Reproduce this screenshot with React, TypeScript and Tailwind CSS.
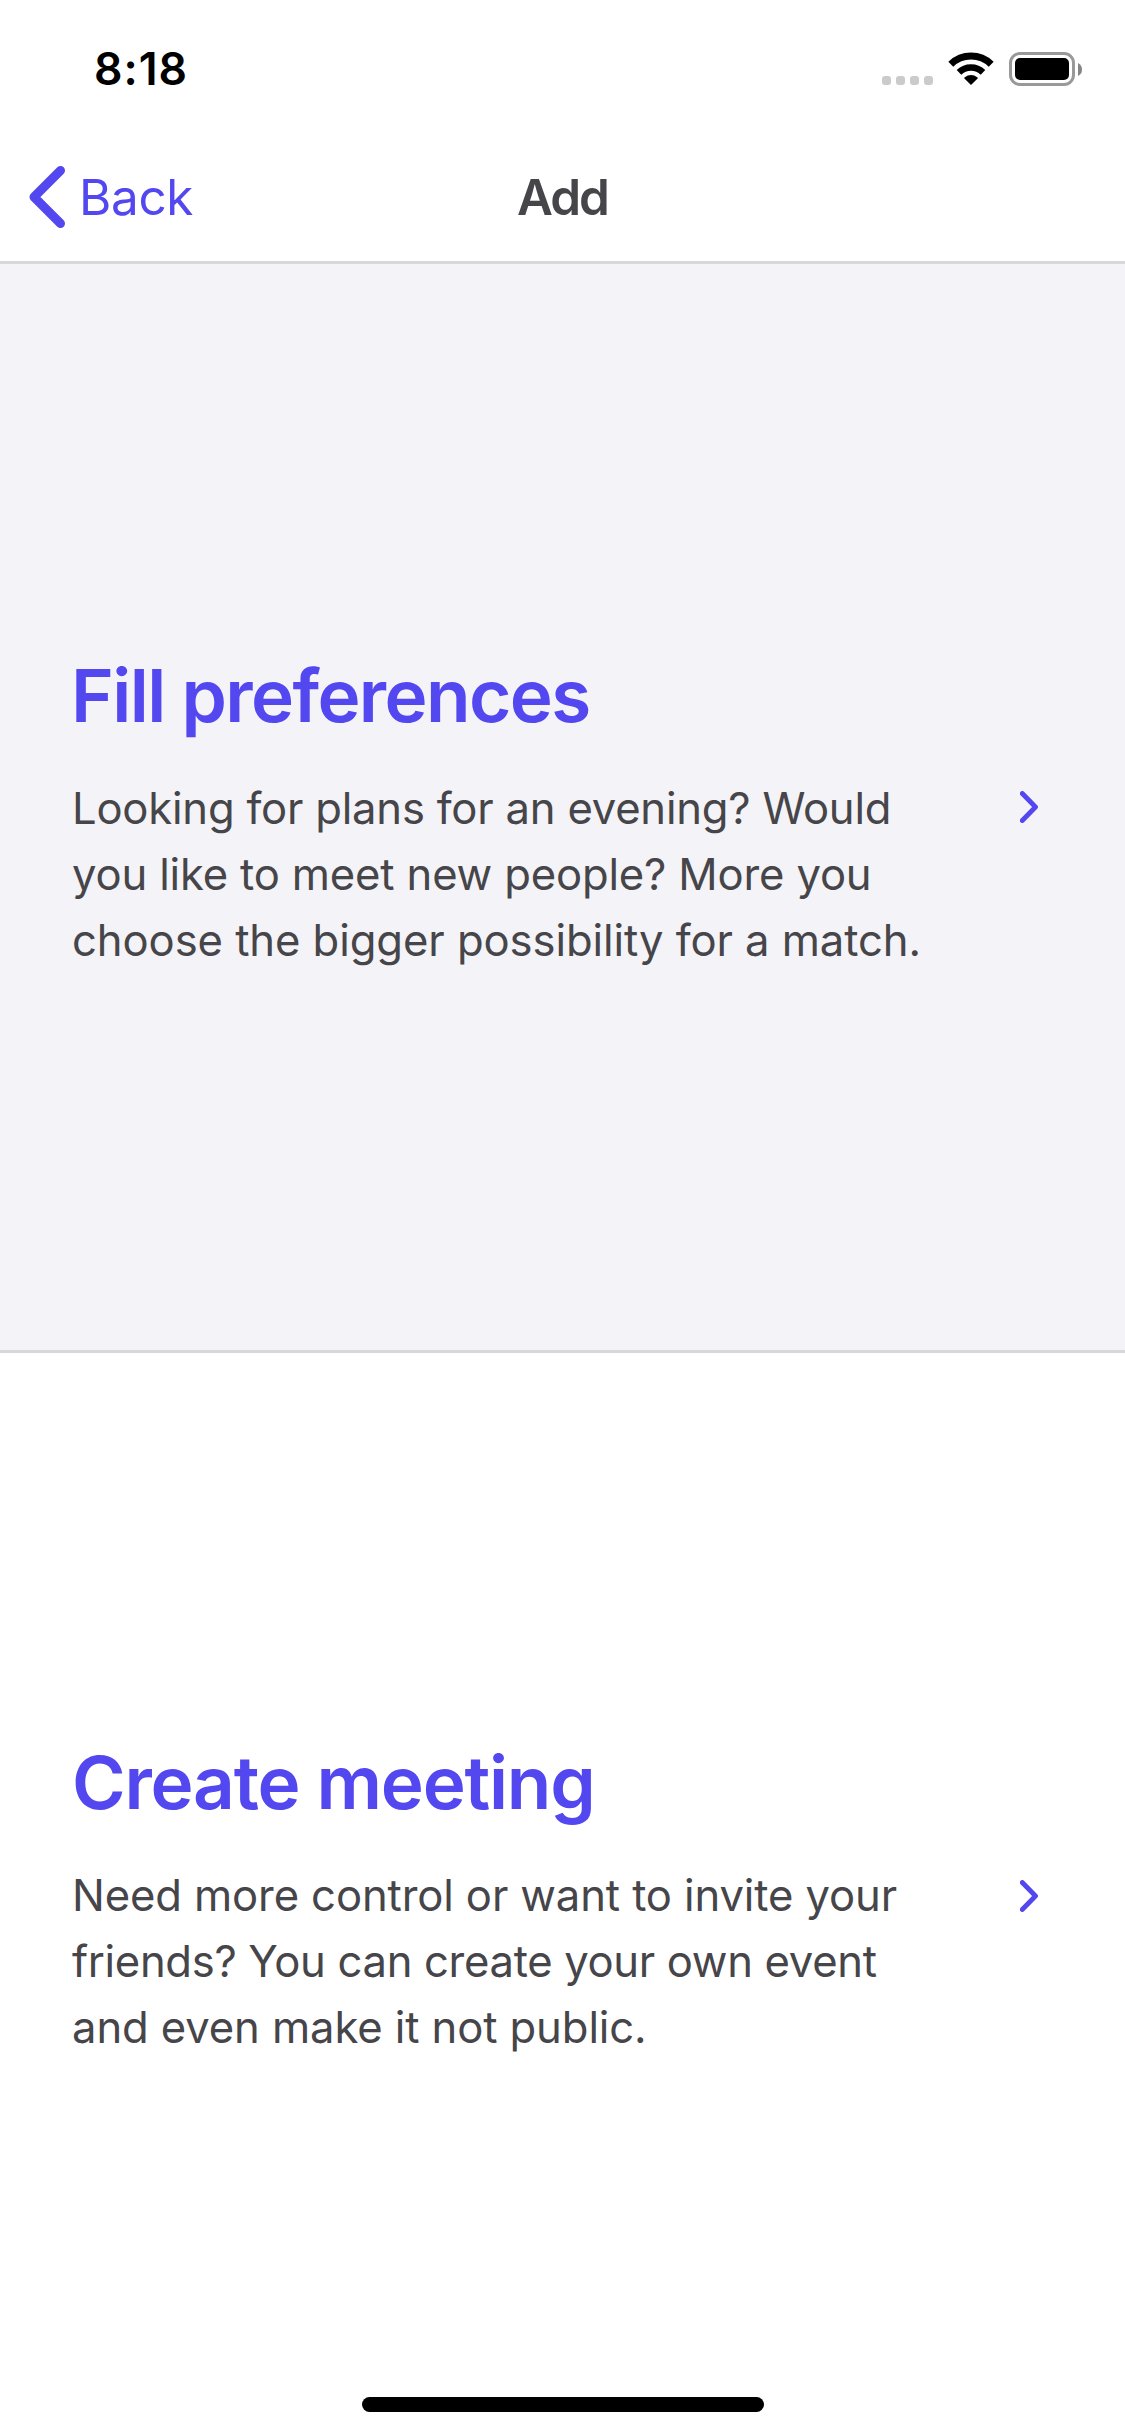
type Line = { text: string; tracking: string };

type OptionProps = {
  title: string;
  titleClass: string;
  lines: Line[];
  className: string;
  textClass: string;
};

function WifiIcon() {
  return (
    <svg width="46" height="34" viewBox="0 0 46 34" fill="none" stroke="#000">
      <path d="M2.8 12.2A29 29 0 0 1 43.2 12.2" strokeWidth="7" />
      <path d="M11 20.4A17.3 17.3 0 0 1 35 20.4" strokeWidth="6.6" />
      <path
        d="M23 33L16.4 26.5Q15.8 25.9 16.5 25.4Q23 20.6 29.5 25.4Q30.2 25.9 29.6 26.5Z"
        fill="#000"
        stroke="none"
      />
    </svg>
  );
}

function StatusBar() {
  return (
    <div className="flex h-[132px] items-start justify-between pr-[43px] pl-[94px]">
      <span className="mt-[39px] text-[44.5px] leading-[60px] font-semibold tracking-[1px] text-black">
        8:18
      </span>
      <div className="mt-[52px] flex">
        <div className="mt-[24px] mr-[15px] flex gap-[5px]">
          {[0, 1, 2, 3].map((i) => (
            <span key={i} className="size-[9px] rounded-[3px] bg-[#cbcbcb]" />
          ))}
        </div>
        <WifiIcon />
        <div className="ml-[15px] flex h-[34px] w-[66px] rounded-[11px] border-[3px] border-[#999] p-[3px]">
          <span className="flex-1 rounded-[5px] bg-black" />
        </div>
        <svg className="mt-[11px] ml-[3px]" width="4" height="13" viewBox="0 0 4 13" fill="#858585">
          <path d="M0 0Q4 2 4 6.5Q4 11 0 13Z" />
        </svg>
      </div>
    </div>
  );
}

function NavBar() {
  return (
    <header className="grid h-[132px] grid-cols-3 items-start border-b-[3px] border-[#d8d8dc]">
      <button className="flex items-start pl-[29px] text-[#5347f0]">
        <svg className="mt-[34px]" width="36" height="62" viewBox="0 0 36 62" fill="none">
          <path
            d="M31.5 4.5L5 31L31.5 57.5"
            stroke="currentColor"
            strokeWidth="9"
            strokeLinecap="round"
            strokeLinejoin="round"
          />
        </svg>
        <span className="mt-[35px] ml-[14px] text-[49.4px] leading-[60px] tracking-[-0.3px]">
          Back
        </span>
      </button>
      <h1 className="mt-[35px] text-center text-[49.4px] leading-[60px] font-semibold tracking-[-2px] text-[#464549]">
        Add
      </h1>
    </header>
  );
}

function Option({ title, titleClass, lines, className, textClass }: OptionProps) {
  return (
    <section className={`flex items-start justify-between pr-[87px] pl-[72px] ${className}`}>
      <div className={textClass}>
        <h2 className={`text-[72.8px] leading-[90px] font-semibold text-[#5347f0] ${titleClass}`}>
          {title}
        </h2>
        <p className="mt-[35px] text-[43.6px] leading-[66px] text-[#464549]">
          {lines.map((line) => (
            <span key={line.text} className={`block whitespace-nowrap ${line.tracking}`}>
              {line.text}
            </span>
          ))}
        </p>
      </div>
      <svg className="mt-[527px]" width="18" height="32" viewBox="0 0 18 32" fill="none">
        <path
          d="M2.3 2.5L15.5 16L2.3 29.5"
          stroke="#5347f0"
          strokeWidth="4.8"
          strokeLinecap="round"
          strokeLinejoin="round"
        />
      </svg>
    </section>
  );
}

export default function App() {
  return (
    <div className="relative flex h-[2436px] w-[1125px] flex-col overflow-hidden bg-white font-['Inter',sans-serif]">
      <StatusBar />
      <NavBar />
      <Option
        title="Fill preferences"
        titleClass="-ml-px tracking-[-1.58px]"
        className="h-[1089px] border-b-[3px] border-[#d8d8dc] bg-[#f4f3f8]"
        textClass="pt-[387px]"
        lines={[
          { text: "Looking for plans for an evening? Would", tracking: "tracking-[-0.215px]" },
          { text: "you like to meet new people? More you", tracking: "tracking-[-0.165px]" },
          { text: "choose the bigger possibility for a match.", tracking: "tracking-[-0.071px]" },
        ]}
      />
      <Option
        title="Create meeting"
        titleClass="tracking-[-1.2px]"
        className="flex-1"
        textClass="pt-[385px]"
        lines={[
          { text: "Need more control or want to invite your", tracking: "tracking-[-0.12px]" },
          { text: "friends? You can create your own event", tracking: "tracking-[-0.32px]" },
          { text: "and even make it not public.", tracking: "tracking-[-0.1px]" },
        ]}
      />
      <div className="absolute bottom-[24px] left-[362px] h-[15px] w-[402px] rounded-full bg-black" />
    </div>
  );
}
